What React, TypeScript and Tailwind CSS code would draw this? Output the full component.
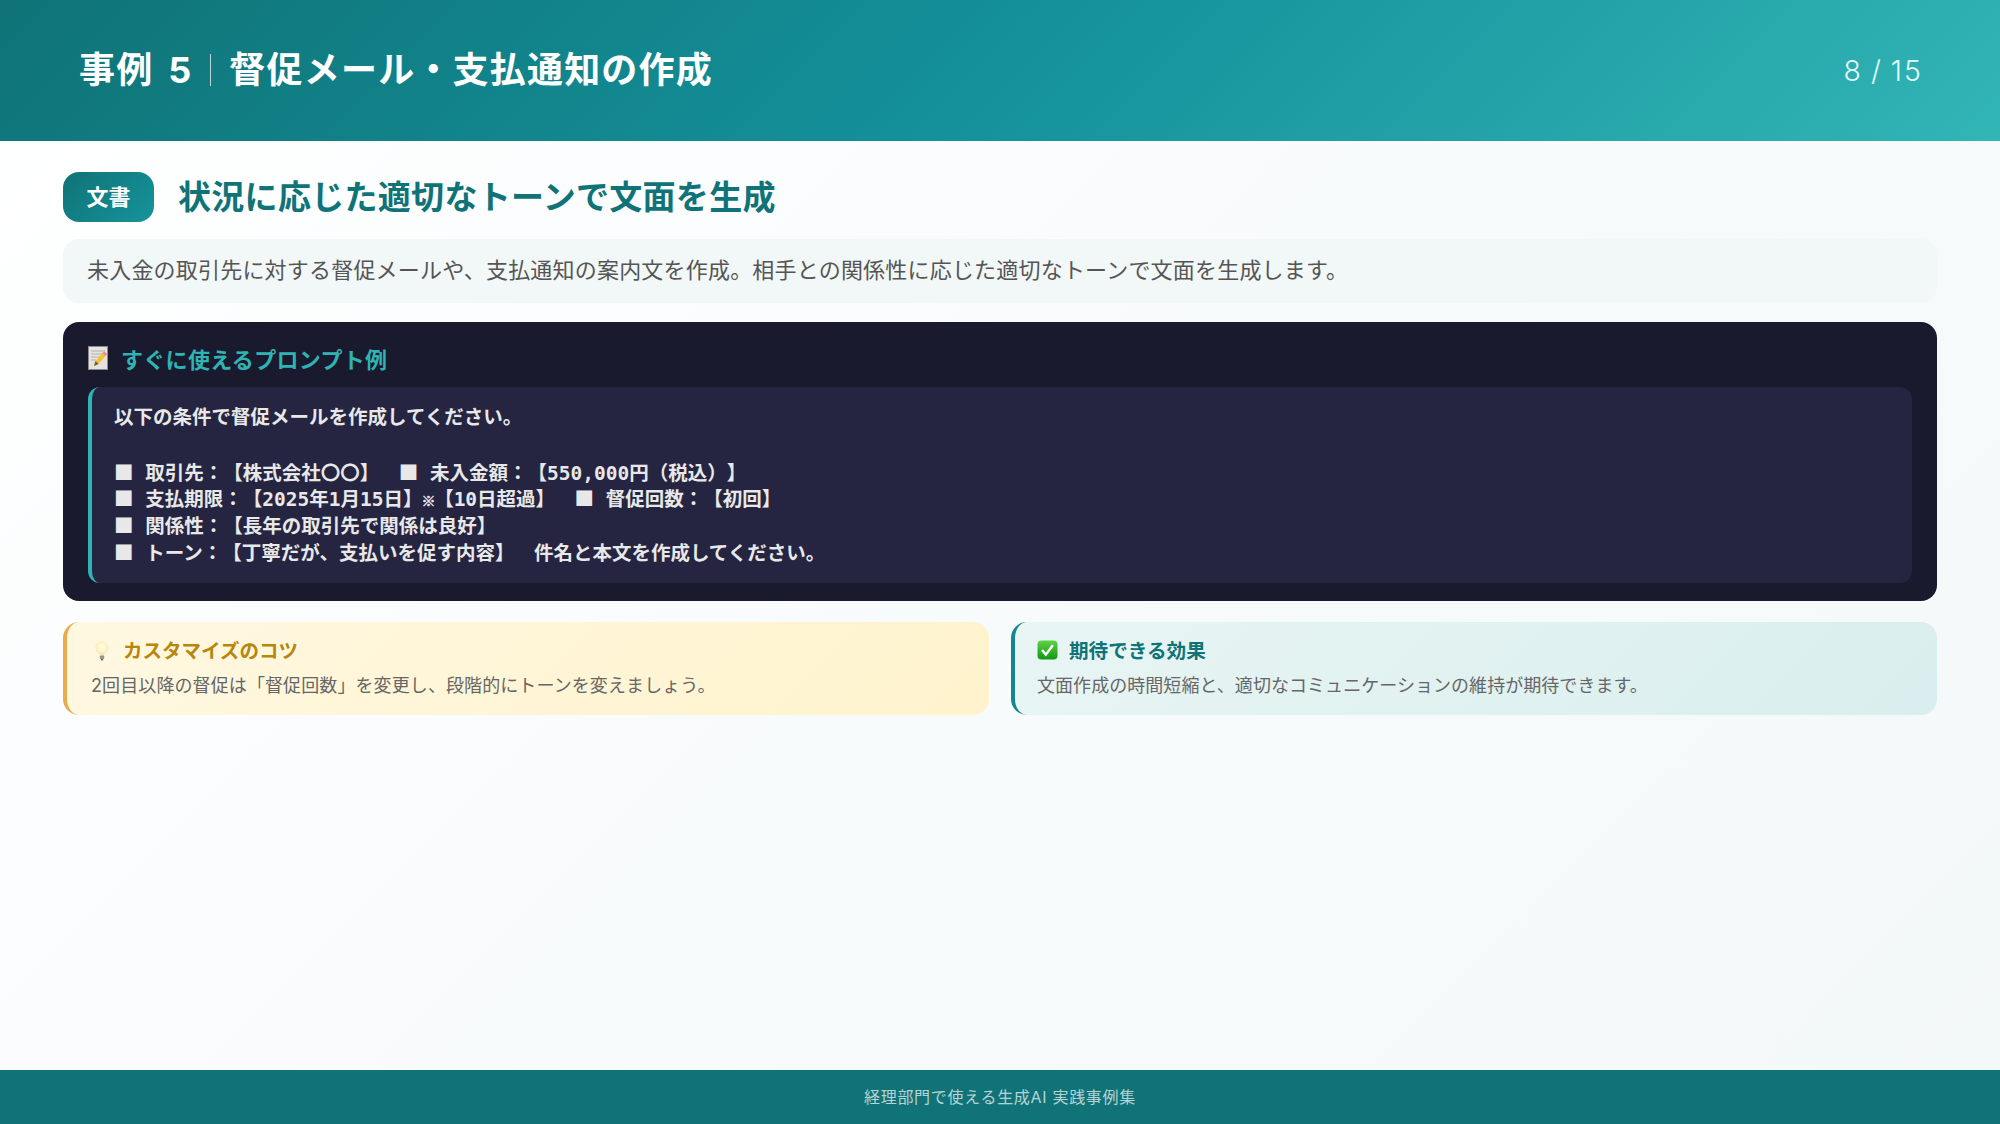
const sans = { fontFamily: '"Inter", "Noto Sans CJK JP", sans-serif' }
const cjk = { fontFamily: '"Noto Sans CJK JP", sans-serif' }

function MemoIcon() {
  return (
    <svg width="20" height="24" viewBox="0 0 20 24" className="shrink-0 -mt-[4px]">
      <rect x="0.5" y="0.5" width="19" height="23" fill="#e6e2de" stroke="#8a8a92" strokeWidth="1" />
      <path d="M3 5h14M3 8h14M3 11h9M3 14h5" stroke="#b4b1af" strokeWidth="1" />
      <path d="M6 20l1.5-5 7-8 3 3-7 8z" fill="#f2c230" />
      <path d="M14.5 7l1.6-1.8 3 2.8-1.6 2z" fill="#e8859a" />
      <path d="M6 20l1.5-5 3 3z" fill="#6a5a48" />
    </svg>
  )
}

function BulbIcon() {
  return (
    <svg width="14" height="20" viewBox="0 0 14 20" className="shrink-0 ml-[4px]">
      <defs>
        <radialGradient id="bulb" cx="50%" cy="45%" r="55%">
          <stop offset="0%" stopColor="#fffdf0" />
          <stop offset="70%" stopColor="#fff3c2" />
          <stop offset="100%" stopColor="#f6e3a4" />
        </radialGradient>
      </defs>
      <circle cx="7" cy="6.5" r="6.5" fill="url(#bulb)" />
      <path d="M4.5 11.5h5l-.6 3.5H5.1z" fill="#f7e8b4" />
      <rect x="4.8" y="14.5" width="4.4" height="3.6" rx=".8" fill="#96968e" />
      <rect x="5.8" y="18" width="2.4" height="1.6" rx=".8" fill="#55554f" />
    </svg>
  )
}

function CheckIcon() {
  return (
    <svg width="21" height="20" viewBox="0 0 21 20" className="shrink-0 -mt-[2px]">
      <defs>
        <linearGradient id="check" x1="0" y1="0" x2="0" y2="1">
          <stop offset="0%" stopColor="#62d146" />
          <stop offset="100%" stopColor="#129712" />
        </linearGradient>
      </defs>
      <rect x="0.5" y="0.5" width="20" height="19" rx="4" fill="url(#check)" />
      <path d="M5 10l3.8 4.6 7-9.4" fill="none" stroke="#fff" strokeWidth="2.4" />
    </svg>
  )
}

function Square() {
  return <span style={cjk}>■</span>
}

function PromptLine({ children }: { children?: React.ReactNode }) {
  return <div className="h-[26.8px] leading-[26.8px]">{children}</div>
}

export default function App() {
  return (
    <div
      className="flex flex-col h-[1124px] w-[2000px] overflow-hidden bg-[linear-gradient(135deg,#ffffff_0%,#f8fbfc_50%,#f3f8f9_100%)] text-[#444]"
      style={sans}
    >
      {/* Header */}
      <header className="flex items-center justify-between h-[141px] shrink-0 px-[79px] bg-[linear-gradient(135deg,#0f7377_0%,#14919b_50%,#32b5b5_100%)] text-white">
        <h1 className="flex items-center -mt-[2px] text-[36px] font-bold tracking-[1.2px] [word-spacing:5px] leading-none">
          <span>事例 5</span>
          <span className="w-px h-[32px] bg-white/70 mx-[18px]"></span>
          <span>督促メール・支払通知の作成</span>
        </h1>
        <div className="-mr-[2px] mt-[2px] text-[28.5px] font-light tracking-[2px] [word-spacing:-2px] text-[#e4fbfa]">8 / 15</div>
      </header>

      {/* Content */}
      <main className="flex-1 px-[63px] pt-[31px]">
        <div className="flex items-center gap-[24px] mb-[17px]">
          <span className="flex items-center justify-center w-[91px] h-[50px] rounded-2xl bg-[linear-gradient(135deg,#0f7377,#16939b)] text-white text-[22px] font-bold">
            文書
          </span>
          <h2 className="text-[33px] font-bold tracking-[0.3px] text-[#0f7377] leading-none">
            状況に応じた適切なトーンで文面を生成
          </h2>
        </div>

        <p className="flex items-center h-[64px] px-6 pb-[2px] rounded-2xl bg-[#f2f7f7] text-[22px] tracking-[0.2px] text-[#555] mb-[19px]">
          未入金の取引先に対する督促メールや、支払通知の案内文を作成。相手との関係性に応じた適切なトーンで文面を生成します。
        </p>

        {/* Prompt */}
        <section className="h-[279px] rounded-2xl bg-[#1a1a2e] px-[25px] pt-[25px] mb-[21px]">
          <div className="flex items-center gap-[13px] h-[26px] mb-[14px]">
            <MemoIcon />
            <h3 className="text-[22px] font-bold tracking-[0.3px] text-[#2fb3b3] leading-none">すぐに使えるプロンプト例</h3>
          </div>
          <div
            className="h-[196px] rounded-xl border-l-4 border-[#2fb3b3] bg-[#252542] px-[22px] pt-[18px] text-[19.5px] font-bold text-[#e8e8e8] whitespace-pre [text-spacing-trim:space-all]"
            style={{ fontFamily: '"DejaVu Sans Mono", "Noto Sans CJK JP", monospace' }}
          >
            <PromptLine>以下の条件で督促メールを作成してください。</PromptLine>
            <PromptLine />
            <PromptLine>
              <Square /> 取引先：【株式会社〇〇】　<Square /> 未入金額：【550,000円（税込）】
            </PromptLine>
            <PromptLine>
              <Square /> 支払期限：【2025年1月15日】
              <span className="inline-block w-[11.7px] -indent-[1px] text-[14px] leading-none [-webkit-text-stroke:0.5px_#e8e8e8]">※</span>
              【10日超過】　<Square /> 督促回数：【初回】
            </PromptLine>
            <PromptLine>
              <Square /> 関係性：【長年の取引先で関係は良好】
            </PromptLine>
            <PromptLine>
              <Square /> トーン：【丁寧だが、支払いを促す内容】　件名と本文を作成してください。
            </PromptLine>
          </div>
        </section>

        {/* Callouts */}
        <div className="grid grid-cols-2 gap-[22px]">
          <div className="h-[93px] rounded-2xl border-l-4 border-[#e8ab4f] bg-[linear-gradient(135deg,#fff8e1,#fff3cd)] pl-6 pt-[15px]">
            <div className="flex items-center gap-[14px] mb-[7px]">
              <BulbIcon />
              <h4 className="text-[19.5px] font-bold text-[#b8860b] leading-[28px]">カスタマイズのコツ</h4>
            </div>
            <p className="text-[18px] tracking-[0.1px] leading-[28px] text-[#666]">
              2回目以降の督促は「督促回数」を変更し、段階的にトーンを変えましょう。
            </p>
          </div>
          <div className="h-[93px] rounded-2xl border-l-4 border-[#14878f] bg-[linear-gradient(135deg,#e8f5f4,#d9eeee)] pl-[22px] pt-[15px]">
            <div className="flex items-center gap-[11px] mb-[7px]">
              <CheckIcon />
              <h4 className="text-[19.6px] font-bold text-[#0f7377] leading-[28px]">期待できる効果</h4>
            </div>
            <p className="text-[18px] tracking-[0.05px] leading-[28px] text-[#666]">
              文面作成の時間短縮と、適切なコミュニケーションの維持が期待できます。
            </p>
          </div>
        </div>
      </main>

      {/* Footer */}
      <footer className="flex items-center justify-center h-[54px] shrink-0 bg-[#0f7377] text-[16px] tracking-[0.7px] text-white/70">
        経理部門で使える生成AI 実践事例集
      </footer>
    </div>
  )
}
